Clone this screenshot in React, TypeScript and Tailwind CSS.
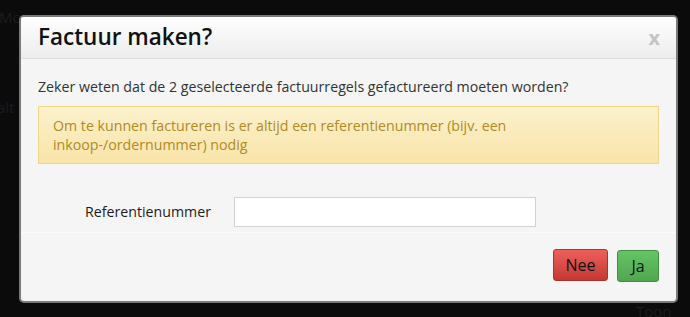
export default function App() {
  return (
    <div
      className="relative h-[317px] w-[690px] overflow-hidden bg-[#0b0b0b] text-[#1c1c1c]"
      style={{ fontFamily: '"Open Sans", "Liberation Sans", sans-serif' }}
    >
      {/* page behind the overlay */}
      <span className="absolute left-[-1px] top-[6px] text-[15px]">Mo</span>
      <span className="absolute left-[-3px] top-[96px] text-[15px]">alt</span>
      <span className="absolute left-[636px] top-[300px] text-[15px]">Toon</span>

      <div className="relative ml-[19px] mt-[15px] flex w-[659px] flex-col overflow-hidden rounded-[5px] border-2 border-[#7a7a7a] bg-[#f5f5f5]">
        <div className="flex h-[42px] items-center justify-between border-b border-[#dcdcdc] bg-gradient-to-b from-[#ffffff] to-[#ececec] pl-[17px] pr-[16px]">
          <h3 className="text-[22.5px] font-semibold leading-none text-[#111]">Factuur maken?</h3>
          <span className="text-[20px] font-bold leading-none text-[#c4c4c4]">x</span>
        </div>

        <div className="px-[17px] pt-[18px]">
          <p className="text-[14.2px] leading-[20px] text-[#333]">
            Zeker weten dat de 2 geselecteerde factuurregels gefactureerd moeten worden?
          </p>
          <div className="mt-[9px] border border-[#f1d68a] bg-gradient-to-b from-[#fcf1cc] to-[#f9e4a8] px-[14px] pb-[9px] pt-[9px] text-[14.2px] leading-[19px] text-[#b08a24]">
            Om te kunnen factureren is er altijd een referentienummer (bijv. een
            <br />
            inkoop-/ordernummer) nodig
          </div>

          <div className="mt-[33px] flex items-center pb-[5px]">
            <label className="w-[173px] text-right text-[14.2px] text-[#1c1c1c]">Referentienummer</label>
            <input
              className="ml-[23px] h-[30px] w-[302px] border border-[#d2d2d2] bg-white px-2 outline-none"
              type="text"
            />
          </div>
        </div>

        <div className="flex h-[69px] items-start justify-end gap-[9px] border-t border-[#fbfbfb] pr-[17px] pt-[16px]">
          <button className="h-[32px] w-[55px] rounded-[3px] border border-[#b32f2a] bg-gradient-to-b from-[#ee5f5b] to-[#c23a33] text-[16px] text-[#111]">
            Nee
          </button>
          <button className="mt-[1px] h-[32px] w-[42px] rounded-[3px] border border-[#3f8f3f] bg-gradient-to-b from-[#66c466] to-[#4fa64f] text-[16px] text-[#111]">
            Ja
          </button>
        </div>
      </div>
    </div>
  )
}
